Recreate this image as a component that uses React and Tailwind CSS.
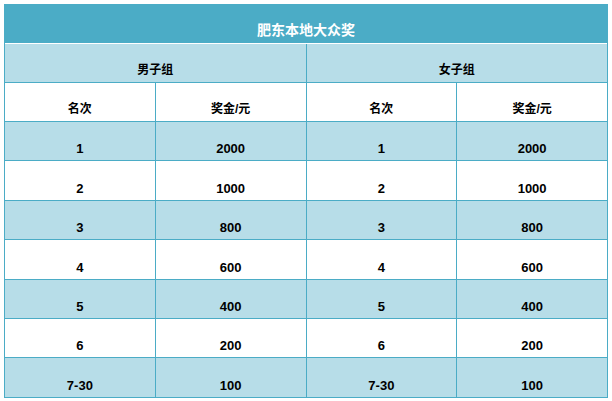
import React from 'react';

const prizes = [
  { rank: '1', amount: '2000', bg: 'bg-[#b7dde8]', h: 'h-[39px]' },
  { rank: '2', amount: '1000', bg: 'bg-white', h: 'h-[40px]' },
  { rank: '3', amount: '800', bg: 'bg-[#b7dde8]', h: 'h-[39px]' },
  { rank: '4', amount: '600', bg: 'bg-white', h: 'h-[40px]' },
  { rank: '5', amount: '400', bg: 'bg-[#b7dde8]', h: 'h-[39px]' },
  { rank: '6', amount: '200', bg: 'bg-white', h: 'h-[39px]' },
  { rank: '7-30', amount: '100', bg: 'bg-[#b7dde8]', h: 'h-[39px]' },
];

const font = "font-['Liberation_Sans','Noto_Sans_CJK_SC',sans-serif]";

const Cell = ({ children, last, cjk }) => (
  <div
    className={`flex-1 flex items-end justify-center pb-[4px] leading-[15px] font-bold text-black ${
      cjk ? 'text-[12px]' : 'text-[13px]'
    } ${last ? '' : 'border-r border-[#4bacc6]'}`}
  >
    {children}
  </div>
);

const App = () => {
  return (
    <div className={`w-[612px] h-[401px] bg-white pt-[4px] pl-[4px] ${font}`}>
      <div className="w-[604px] border-l border-r border-b border-t border-[#4bacc6]">
        {/* Title */}
        <div className="h-[39px] bg-[#4bacc6] border-b border-white flex items-end justify-center pb-[5px]">
          <span className="text-white text-[14px] font-bold leading-[16px]">肥东本地大众奖</span>
        </div>

        {/* Group headers */}
        <div className="h-[39px] flex bg-[#b7dde8] border-b border-[#4bacc6]">
          <Cell cjk>男子组</Cell>
          <Cell cjk last>女子组</Cell>
        </div>

        {/* Column headers */}
        <div className="h-[39px] flex bg-white border-b border-[#4bacc6]">
          <Cell cjk>名次</Cell>
          <Cell cjk>奖金/元</Cell>
          <Cell cjk>名次</Cell>
          <Cell cjk last>奖金/元</Cell>
        </div>

        {prizes.map((p, i) => (
          <div
            key={p.rank}
            className={`flex ${p.bg} ${p.h} ${i < prizes.length - 1 ? 'border-b border-[#4bacc6]' : ''}`}
          >
            <Cell>{p.rank}</Cell>
            <Cell>{p.amount}</Cell>
            <Cell>{p.rank}</Cell>
            <Cell last>{p.amount}</Cell>
          </div>
        ))}
      </div>
    </div>
  );
};

export default App;
